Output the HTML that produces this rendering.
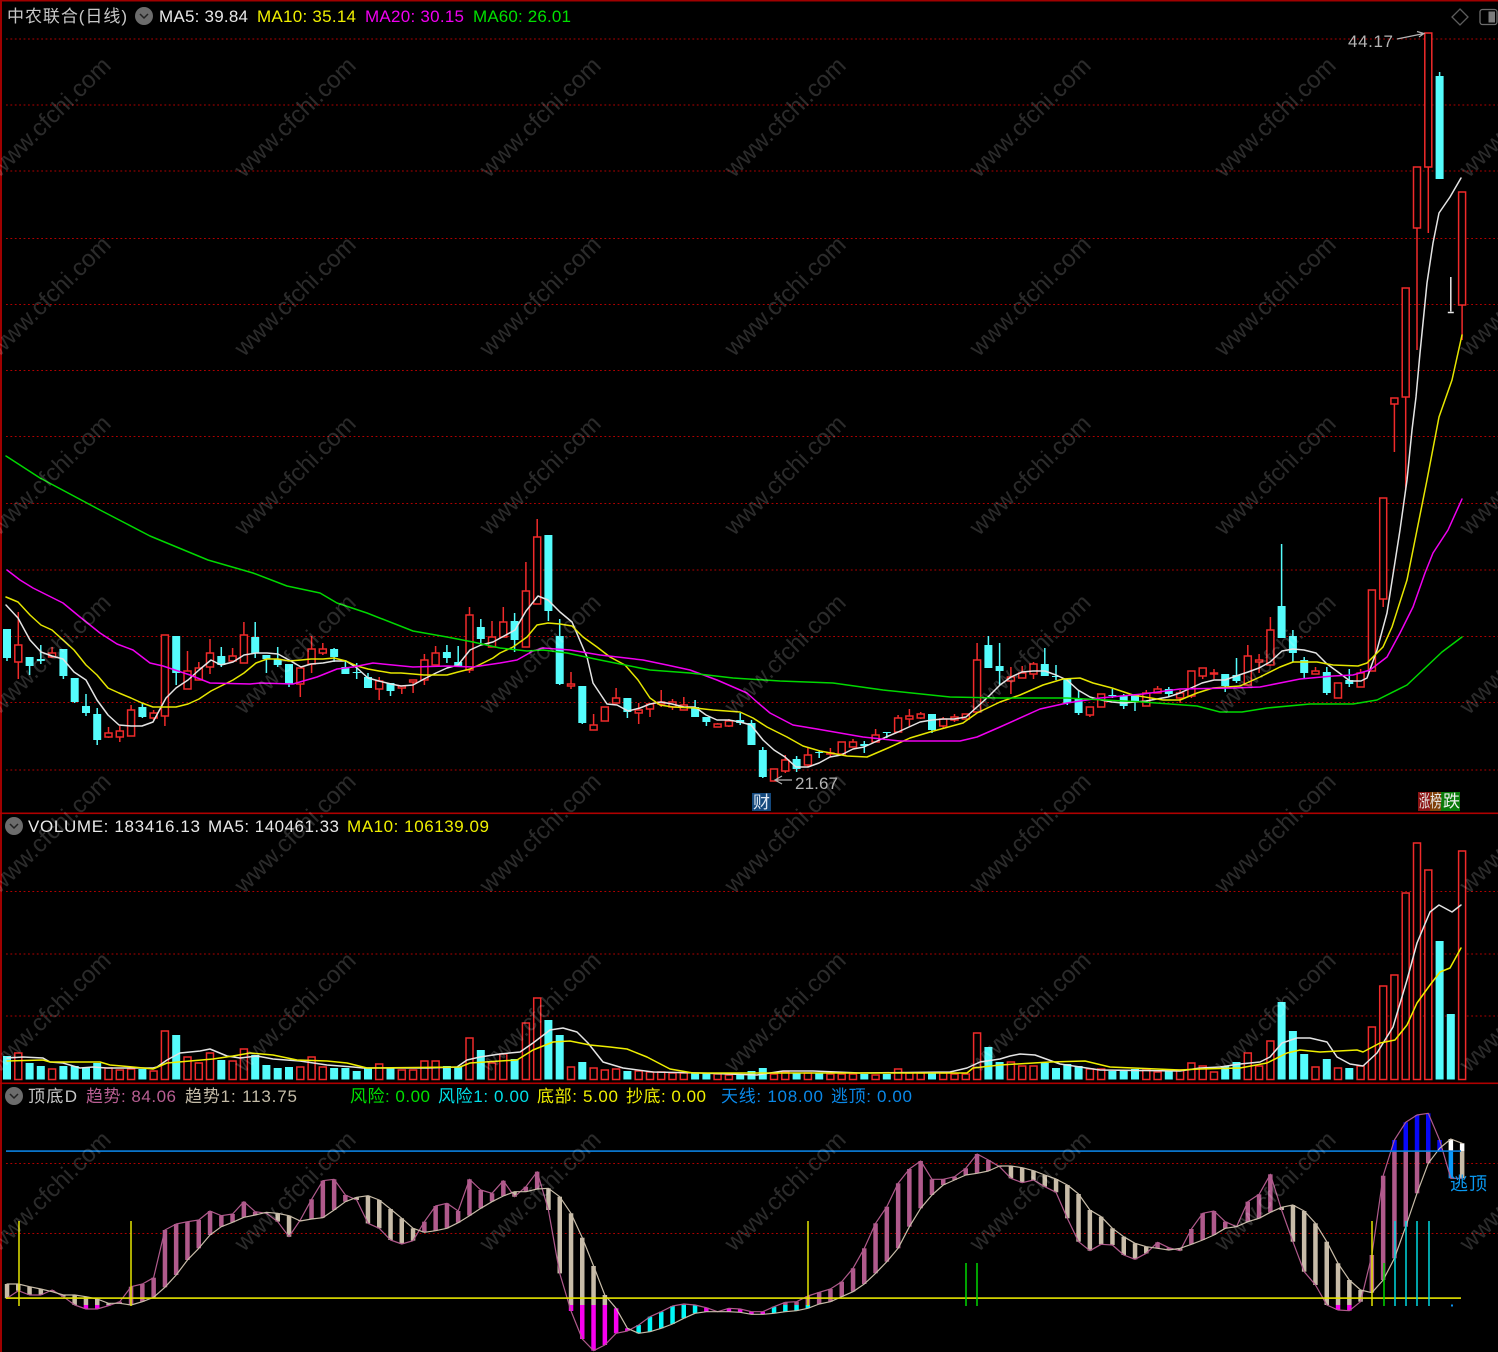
<!DOCTYPE html>
<html lang="zh">
<head>
<meta charset="utf-8">
<title>中农联合(日线)</title>
<style>
html,body{margin:0;padding:0;background:#000;width:1498px;height:1352px;overflow:hidden}
svg{display:block;position:absolute;left:0;top:0;filter:blur(.25px)}
text{font-family:"Liberation Sans","Noto Sans CJK SC",sans-serif;font-size:17px}
.g{stroke:#b00000;stroke-width:1.100;stroke-dasharray:1.800 2.600;fill:none}
.l{fill:none;stroke-width:1.500;stroke-linejoin:round;stroke-linecap:round}
.w{fill:#fff;fill-opacity:.17;font-size:24px;text-anchor:middle}
</style>
</head>
<body>
<svg width="1498" height="1352" viewBox="0 0 1498 1352" xmlns="http://www.w3.org/2000/svg">
<rect width="1498" height="1352" fill="#000"/>
<!-- grid -->
<path class="g" d="M6 39H1498M6 105H1498M6 171H1498M6 238.500H1498M6 304.500H1498M6 370.500H1498M6 436.500H1498M6 503.500H1498M6 570H1498M6 636.500H1498M6 702.500H1498M6 770H1498M6 891.500H1498M6 954H1498M6 1016H1498M6 1163.500H1498M6 1233.500H1498"/>
<!-- frame -->
<rect x="0" y="0" width="1498" height="1.500" fill="#a00000"/>
<rect x="0" y="0" width="2" height="1352" fill="#a00000"/>
<rect x="0" y="812.500" width="1498" height="1.600" fill="#b00000"/>
<rect x="0" y="1082.500" width="1498" height="1.600" fill="#b00000"/>

<g id="candles"></g>
<polyline class="l" stroke="#e4e4e4" points="6,605 18,618 30,640 41,652 52,656 63,659 74,672 86,680 97,700 108,715 119,725 131,726 142,726 153,722 166,698 176,688 188,680 199,670 211,660 221,665 233,662 244,655 256,653 267,653 278,654 289,660 301,667 311,664 323,663 334,661 346,661 357,668 368,678 379,681 391,684 401,686 413,685 424,679 436,673 447,668 458,665 470,650 481,645 493,642 504,636 515,630 526,611 538,596 548,600 560,612 572,622 587,657 593,683 607,704 617,705 628,711 640,708 650,704 661,702 672,704 684,707 695,707 706,715 717,720 729,720 740,722 751,725 763,740 774,750 785,757 796,767 808,767 819,763 830,757 841,755 853,749 864,747 875,742 886,737 898,732 909,727 920,722 932,720 943,719 954,719 966,717 977,707 988,697 1000,685 1011,677 1022,672 1033,671 1045,671 1056,675 1067,680 1078,690 1090,697 1101,700 1112,702 1123,703 1135,702 1146,701 1157,699 1168,697 1180,693 1191,688 1202,683 1214,680 1225,680 1236,676 1248,672 1259,668 1270,662 1282,651 1293,649 1304,650 1316,653 1327,664 1338,672 1350,681 1361,681 1367,678 1377,650 1387,613 1400,530 1407,480 1412,430 1416,397 1420,353 1427,283 1433,243 1439,213 1450,197 1461,178"/>
<polyline class="l" stroke="#e6e600" points="6,597 18,602 30,615 41,625 52,630 63,640 74,650 86,665 97,675 108,688 119,693 131,698 142,703 153,707 166,707 176,707 188,704 199,699 211,691 221,686 233,680 244,673 256,663 267,659 278,659 289,661 301,660 311,659 323,659 334,658 346,661 357,666 368,669 379,671 391,673 401,673 413,674 424,675 436,675 447,675 458,672 470,669 481,664 493,658 500,653 513,647 527,637 537,625 548,623 560,624 572,626 583,637 597,647 610,657 625,665 638,680 650,698 660,705 673,707 695,708 713,710 740,712 753,718 767,727 787,737 803,746 820,751 847,756 867,757 888,748 910,738 930,732 963,723 977,713 1000,702 1020,695 1043,685 1063,679 1080,678 1093,683 1112,688 1133,695 1163,700 1180,700 1197,693 1213,688 1240,686 1260,677 1280,667 1293,662 1317,662 1333,665 1358,666 1367,663 1383,647 1392,627 1407,580 1417,530 1427,480 1439,417 1452,380 1462,335"/>
<polyline class="l" stroke="#f000f0" points="7,570 20,580 33,588 63,603 80,617 100,633 117,644 133,650 150,663 163,666 190,675 210,683 250,684 260,683 293,684 317,677 337,669 353,667 373,663 413,667 447,666 473,667 500,663 517,660 533,651 543,648 570,650 600,655 643,660 667,665 690,670 717,680 747,693 757,702 770,713 793,725 817,729 863,737 900,741 960,741 977,737 1000,727 1040,709 1067,703 1100,698 1143,694 1180,689 1233,688 1260,687 1300,679 1333,676 1353,675 1370,670 1387,657 1400,633 1413,607 1425,573 1433,553 1448,530 1462,499"/>
<polyline class="l" stroke="#00d800" points="6,456 40,478 100,510 150,536 208,560 253,573 287,586 320,593 337,603 367,613 413,631 447,637 473,642 500,648 527,651 543,650 567,653 600,660 650,670 690,673 733,678 780,681 833,683 883,690 950,697 1000,698 1067,698 1143,702 1197,706 1220,712 1242,712 1267,708 1310,704 1353,704 1377,700 1407,685 1442,652 1462,637"/>

<g id="vol"></g>
<polyline class="l" stroke="#e4e4e4" points="7,1058 23,1057 43,1058 50,1062 63,1063 80,1068 93,1067 107,1068 153,1068 157,1067 167,1060 180,1053 200,1051 210,1049 227,1056 240,1058 257,1056 273,1059 300,1061 327,1065 353,1067 363,1068 427,1068 457,1067 467,1060 480,1057 500,1054 520,1052 533,1043 550,1030 563,1028 577,1032 588,1043 603,1062 623,1068 653,1072 700,1073 757,1075 783,1071 813,1071 860,1073 950,1072 967,1068 980,1062 1000,1059 1010,1056 1020,1054 1035,1055 1060,1064 1100,1070 1180,1071 1200,1068 1220,1067 1240,1064 1260,1062 1270,1057 1282,1043 1297,1038 1310,1038 1327,1042 1337,1057 1350,1064 1363,1066 1377,1053 1393,1027 1407,980 1417,943 1430,912 1439,905 1452,912 1461,905"/>
<polyline class="l" stroke="#eeee00" points="7,1061 43,1060 50,1062 100,1062 110,1065 133,1067 153,1069 167,1063 190,1061 213,1059 233,1056 250,1053 273,1055 297,1060 327,1061 347,1063 367,1068 460,1067 470,1063 500,1061 517,1060 533,1050 553,1042 570,1041 590,1045 610,1047 627,1049 647,1057 670,1069 693,1073 967,1073 973,1068 1000,1065 1050,1062 1085,1061 1110,1067 1180,1070 1200,1069 1240,1068 1267,1063 1287,1053 1300,1050 1320,1052 1357,1050 1363,1052 1380,1043 1395,1040 1407,1025 1417,1003 1430,985 1440,972 1450,968 1461,948"/>

<g id="ind"></g>
<rect x="6" y="1150.300" width="1455" height="1.600" fill="#0a80e0"/>
<rect x="6" y="1297.300" width="1455" height="1.600" fill="#e4e400"/>
<path fill="none" stroke-width="1.500" stroke="#e4e400" d="M19 1221V1306M131 1221V1306M808 1221V1306M1372 1221V1306"/>
<path fill="none" stroke-width="1.500" stroke="#00d800" d="M966 1263V1306M977 1263V1306M1384 1263V1306"/>
<path fill="none" stroke-width="1.500" stroke="#00d8e0" d="M1395 1221V1306M1406 1221V1306M1417 1221V1306M1429 1221V1306"/>
<rect x="1451" y="1304.500" width="2" height="2" fill="#0a90f0"/>

<!-- watermark -->
<g>
<text class="w" transform="translate(50,117) rotate(-44.500)" y="8">www.cfchi.com</text>
<text class="w" transform="translate(295,117) rotate(-44.500)" y="8">www.cfchi.com</text>
<text class="w" transform="translate(540,117) rotate(-44.500)" y="8">www.cfchi.com</text>
<text class="w" transform="translate(785,117) rotate(-44.500)" y="8">www.cfchi.com</text>
<text class="w" transform="translate(1030,117) rotate(-44.500)" y="8">www.cfchi.com</text>
<text class="w" transform="translate(1275,117) rotate(-44.500)" y="8">www.cfchi.com</text>
<text class="w" transform="translate(1520,117) rotate(-44.500)" y="8">www.cfchi.com</text>
<text class="w" transform="translate(50,296) rotate(-44.500)" y="8">www.cfchi.com</text>
<text class="w" transform="translate(295,296) rotate(-44.500)" y="8">www.cfchi.com</text>
<text class="w" transform="translate(540,296) rotate(-44.500)" y="8">www.cfchi.com</text>
<text class="w" transform="translate(785,296) rotate(-44.500)" y="8">www.cfchi.com</text>
<text class="w" transform="translate(1030,296) rotate(-44.500)" y="8">www.cfchi.com</text>
<text class="w" transform="translate(1275,296) rotate(-44.500)" y="8">www.cfchi.com</text>
<text class="w" transform="translate(1520,296) rotate(-44.500)" y="8">www.cfchi.com</text>
<text class="w" transform="translate(50,475) rotate(-44.500)" y="8">www.cfchi.com</text>
<text class="w" transform="translate(295,475) rotate(-44.500)" y="8">www.cfchi.com</text>
<text class="w" transform="translate(540,475) rotate(-44.500)" y="8">www.cfchi.com</text>
<text class="w" transform="translate(785,475) rotate(-44.500)" y="8">www.cfchi.com</text>
<text class="w" transform="translate(1030,475) rotate(-44.500)" y="8">www.cfchi.com</text>
<text class="w" transform="translate(1275,475) rotate(-44.500)" y="8">www.cfchi.com</text>
<text class="w" transform="translate(1520,475) rotate(-44.500)" y="8">www.cfchi.com</text>
<text class="w" transform="translate(50,654) rotate(-44.500)" y="8">www.cfchi.com</text>
<text class="w" transform="translate(295,654) rotate(-44.500)" y="8">www.cfchi.com</text>
<text class="w" transform="translate(540,654) rotate(-44.500)" y="8">www.cfchi.com</text>
<text class="w" transform="translate(785,654) rotate(-44.500)" y="8">www.cfchi.com</text>
<text class="w" transform="translate(1030,654) rotate(-44.500)" y="8">www.cfchi.com</text>
<text class="w" transform="translate(1275,654) rotate(-44.500)" y="8">www.cfchi.com</text>
<text class="w" transform="translate(1520,654) rotate(-44.500)" y="8">www.cfchi.com</text>
<text class="w" transform="translate(50,833) rotate(-44.500)" y="8">www.cfchi.com</text>
<text class="w" transform="translate(295,833) rotate(-44.500)" y="8">www.cfchi.com</text>
<text class="w" transform="translate(540,833) rotate(-44.500)" y="8">www.cfchi.com</text>
<text class="w" transform="translate(785,833) rotate(-44.500)" y="8">www.cfchi.com</text>
<text class="w" transform="translate(1030,833) rotate(-44.500)" y="8">www.cfchi.com</text>
<text class="w" transform="translate(1275,833) rotate(-44.500)" y="8">www.cfchi.com</text>
<text class="w" transform="translate(1520,833) rotate(-44.500)" y="8">www.cfchi.com</text>
<text class="w" transform="translate(50,1012) rotate(-44.500)" y="8">www.cfchi.com</text>
<text class="w" transform="translate(295,1012) rotate(-44.500)" y="8">www.cfchi.com</text>
<text class="w" transform="translate(540,1012) rotate(-44.500)" y="8">www.cfchi.com</text>
<text class="w" transform="translate(785,1012) rotate(-44.500)" y="8">www.cfchi.com</text>
<text class="w" transform="translate(1030,1012) rotate(-44.500)" y="8">www.cfchi.com</text>
<text class="w" transform="translate(1275,1012) rotate(-44.500)" y="8">www.cfchi.com</text>
<text class="w" transform="translate(1520,1012) rotate(-44.500)" y="8">www.cfchi.com</text>
<text class="w" transform="translate(50,1191) rotate(-44.500)" y="8">www.cfchi.com</text>
<text class="w" transform="translate(295,1191) rotate(-44.500)" y="8">www.cfchi.com</text>
<text class="w" transform="translate(540,1191) rotate(-44.500)" y="8">www.cfchi.com</text>
<text class="w" transform="translate(785,1191) rotate(-44.500)" y="8">www.cfchi.com</text>
<text class="w" transform="translate(1030,1191) rotate(-44.500)" y="8">www.cfchi.com</text>
<text class="w" transform="translate(1275,1191) rotate(-44.500)" y="8">www.cfchi.com</text>
<text class="w" transform="translate(1520,1191) rotate(-44.500)" y="8">www.cfchi.com</text>
</g>

<!-- header row 1 -->
<text x="7" y="22" fill="#c8c8c8" textLength="120">中农联合(日线)</text>
<circle cx="144" cy="16" r="9" fill="#6c6c6c"/>
<path d="M140 14l4 4 4-4" fill="none" stroke="#222" stroke-width="1.500"/>
<text x="159" y="22" fill="#e8e8e8" textLength="89">MA5: 39.84</text>
<text x="257" y="22" fill="#f0f000" textLength="99">MA10: 35.14</text>
<text x="365" y="22" fill="#f000f0" textLength="99">MA20: 30.15</text>
<text x="473" y="22" fill="#00e000" textLength="98">MA60: 26.01</text>

<!-- top right icons -->
<path d="M1460 9l8 8-8 8-8-8z" fill="none" stroke="#5c5c5c" stroke-width="1.300"/>
<rect x="1480" y="9.500" width="17" height="15" rx="2.500" fill="#000" stroke="#6c6c6c" stroke-width="1.300"/>
<rect x="1488.500" y="11.500" width="6.500" height="11" fill="#7c7c7c"/>

<!-- price labels -->
<text x="1348" y="47" fill="#b4b4b4" textLength="45">44.17</text>
<path d="M1397 39L1424 33.500M1417 31.500L1424 33.500L1419 37" fill="none" stroke="#b4b4b4" stroke-width="1.200"/>
<text x="795" y="789" fill="#b4b4b4" textLength="43">21.67</text>
<path d="M792 780H775M782 776L775 780L782 784" fill="none" stroke="#b4b4b4" stroke-width="1.200"/>

<!-- badges -->
<rect x="752" y="793" width="19" height="18" fill="#14487c"/>
<text x="753" y="808" fill="#dfe8f4" textLength="17">财</text>
<rect x="1418" y="792" width="12" height="19" fill="#8c1414"/>
<rect x="1430" y="792" width="11" height="19" fill="#80400a"/>
<rect x="1441" y="792" width="19" height="19" fill="#0a7a0a"/>
<text x="1419" y="807" fill="#e8e8e8" textLength="11" lengthAdjust="spacingAndGlyphs">涨</text>
<text x="1430" y="807" fill="#e8e8e8" textLength="12" lengthAdjust="spacingAndGlyphs">榜</text>
<text x="1443" y="807" fill="#f0f0f0" textLength="17">跌</text>

<!-- header row 2 -->
<circle cx="14" cy="826" r="9" fill="#6c6c6c"/>
<path d="M10 824l4 4 4-4" fill="none" stroke="#222" stroke-width="1.500"/>
<text x="28" y="832" fill="#e8e8e8" textLength="172">VOLUME: 183416.13</text>
<text x="208" y="832" fill="#e8e8e8" textLength="131">MA5: 140461.33</text>
<text x="347" y="832" fill="#f0f000" textLength="142">MA10: 106139.09</text>

<!-- header row 3 -->
<circle cx="14" cy="1096" r="9" fill="#6c6c6c"/>
<path d="M10 1094l4 4 4-4" fill="none" stroke="#222" stroke-width="1.500"/>
<text x="28" y="1102" fill="#c8c8c8" textLength="49">顶底D</text>
<text x="86" y="1102" fill="#b85e92" textLength="90">趋势: 84.06</text>
<text x="185" y="1102" fill="#c4bca8" textLength="112">趋势1: 113.75</text>
<text x="350" y="1102" fill="#00e000" textLength="80">风险: 0.00</text>
<text x="438" y="1102" fill="#00e0e8" textLength="91">风险1: 0.00</text>
<text x="537" y="1102" fill="#f0f000" textLength="81">底部: 5.00</text>
<text x="626" y="1102" fill="#f0f000" textLength="80">抄底: 0.00</text>
<text x="721" y="1102" fill="#0a88e8" textLength="102">天线: 108.00</text>
<text x="831" y="1102" fill="#0a88e8" textLength="81">逃顶: 0.00</text>
<text x="1450" y="1190" fill="#0a98f0" textLength="37" style="font-size:18px">逃顶</text>
</svg>
<script>
(function(){
var X=function(i){return 7+11.28*i};
var R='#f02a2a',C='#54fcfc',W='#e8e8e8';
// type(0 red,1 cyan,2 white),top,bottom,high,low
var K=[[1,629,658,629,661],[0,645,662,612,679],[1,657,666,657,675],[1,659,661,645,664],[0,653,657,647,658],[1,649,676,649,679],[1,678,702,678,703],[1,706,713,694,716],[1,714,740,708,745],[0,733,737,727,738],
[0,731,737,726,742],[0,710,736,705,736],[1,707,717,703,718],[0,713,718,710,720],[0,635,716,635,726],[1,636,673,636,685],[0,671,689,651,689],[0,668,680,662,680],[0,653,667,639,674],[1,656,665,647,667],
[0,656,661,648,661],[0,635,663,622,663],[1,637,653,622,658],[1,655,659,655,673],[1,659,665,647,667],[1,664,684,664,687],[0,668,684,668,697],[0,649,664,636,673],[0,649,653,643,655],[1,649,657,648,662],
[1,667,674,660,674],[1,672,673,663,679],[1,677,688,673,688],[0,681,689,677,700],[1,683,691,683,696],[0,686,688,686,694],[0,680,682,680,693],[0,660,680,654,685],[0,653,665,646,665],[1,652,658,645,663],
[1,662,666,646,666],[0,615,670,607,673],[1,627,639,619,643],[0,637,647,621,647],[0,622,637,607,637],[1,621,640,613,652],[0,591,647,562,647],[0,537,604,519,604],[1,535,611,535,621],[1,636,684,619,685],
[0,684,686,672,689],[1,686,723,686,724],[0,725,730,714,730],[0,707,721,707,721],[0,698,703,688,703],[1,698,712,698,718],[0,710,713,703,724],[0,704,709,704,717],[0,702,704,690,707],[0,702,707,699,710],
[0,705,710,697,710],[1,707,717,700,717],[1,717,722,717,726],[0,724,727,723,727],[0,721,726,719,727],[1,720,723,713,725],[1,723,745,720,745],[1,750,777,747,778],[0,769,781,769,781],[0,760,771,755,773],
[1,759,769,756,772],[0,755,765,748,767],[1,752,753,750,758],[0,753,754,748,757],[0,742,754,742,754],[0,742,747,739,747],[1,744,746,741,753],[0,735,742,729,742],[1,732,733,732,738],[0,718,732,715,732],
[0,716,719,709,727],[0,714,718,712,719],[1,714,730,714,733],[0,719,726,717,728],[0,717,720,714,722],[0,714,719,714,719],[0,660,712,643,712],[1,645,668,636,668],[1,666,671,643,685],[0,677,681,667,694],
[0,673,678,666,678],[0,664,674,662,679],[1,664,676,648,676],[1,676,677,665,680],[1,679,703,679,705],[1,699,713,690,715],[0,707,715,707,717],[0,694,707,694,707],[1,695,696,689,698],[1,696,706,694,709],
[1,695,702,694,711],[0,693,706,690,706],[0,689,693,686,693],[1,689,694,687,697],[0,693,698,690,703],[0,671,696,671,698],[0,668,676,668,679],[0,673,674,669,679],[1,674,686,674,692],[1,675,681,658,683],
[0,656,685,645,685],[0,660,662,654,673],[0,630,665,617,665],[1,606,638,544,638],[1,636,653,630,662],[1,660,673,657,678],[0,671,674,667,674],[1,672,693,667,695],[0,683,698,683,698],[1,680,684,669,687],
[0,673,687,669,687],[0,590,671,590,671],[0,498,599,498,607],[0,398,404,398,452],[0,288,397,288,490],[0,167,228,167,350],[0,33,167,33,233],[1,76,179,72,179],[2,311.500,312.500,277,312.500],[0,192,305,192,340]];
var V=[1056,1053,1063,1066,1069,1066,1066,1068,1063,1068,1070,1069,1069,1071,1031,1035,1057,1063,1053,1060,1061,1049,1055,1065,1068,1067,1067,1057,1067,1068,1068,1071,1068,1064,1068,1070,1070,1061,1061,1066,1067,1038,1050,1063,1054,1059,1023,998,1020,1035,1067,1062,1068,1070,1069,1071,1071,1072,1072,1073,1073,1073,1073,1074,1075,1074,1071,1068,1074,1072,1073,1073,1073,1074,1074,1074,1074,1075,1074,1069,1073,1073,1073,1073,1074,1074,1033,1047,1062,1062,1066,1066,1063,1068,1064,1066,1069,1069,1071,1070,1069,1070,1072,1071,1070,1063,1066,1072,1066,1062,1053,1066,1041,1002,1031,1054,1067,1059,1068,1068,1066,1027,986,975,893,843,870,941,1014,851];
var A=[640,617,630,630,615,635,660,672,672,662,650,605,597,578,435,417,410,405,378,392,387,350,380,385,410,455,405,343,287,283,330,345,415,430,465,477,467,410,363,355,378,283,315,325,287,335,305,260,375,565,678,762,797,780,745,738,720,695,680,663,657,660,668,680,670,672,680,680,665,652,650,633,622,612,590,550,490,415,365,295,252,228,283,283,275,250,207,225,245,280,293,285,305,322,400,470,497,478,480,510,523,505,472,488,497,432,385,378,410,425,350,328,268,375,470,560,600,660,675,677,650,510,272,165,112,90,85,165,280,280];
var B=[597,597,605,612,620,630,630,635,642,655,655,660,650,637,607,570,525,490,450,425,412,397,390,382,385,392,408,402,398,375,350,337,332,345,372,400,430,442,437,430,413,392,370,350,333,320,320,312,310,335,385,458,543,630,670,730,745,740,730,717,700,685,680,680,680,682,688,688,685,680,677,670,657,650,635,620,597,565,530,490,425,370,330,300,285,270,265,258,243,243,248,257,270,282,300,327,375,395,430,455,475,485,490,495,490,478,465,450,430,425,410,400,382,367,360,378,415,470,535,585,615,623,585,520,425,325,235,190,162,175];
var i,x,k,s='',wr='',wc='',ww='',rr='',cc='';
for(i=0;i<K.length;i++){k=K[i];x=X(i).toFixed(1);
 var w='M'+x+' '+k[3]+'V'+k[1]+'M'+x+' '+k[2]+'V'+k[4];
 if(k[0]==0){wr+=w;rr+='M'+(x-3.5)+' '+k[1]+'h7V'+k[2]+'h-7z';}
 else if(k[0]==1){wc+=w;cc+='M'+(x-4)+' '+k[1]+'h8V'+k[2]+'h-8z';}
 else{ww+=w+'M'+(x-3)+' '+k[2]+'h6';}
}
s='<path d="'+wr+'" stroke="'+R+'" stroke-width="1.500" fill="none"/>'+
  '<path d="'+wc+'" stroke="'+C+'" stroke-width="1.500" fill="none"/>'+
  '<path d="'+ww+'" stroke="'+W+'" stroke-width="1.500" fill="none"/>'+
  '<path d="'+rr+'" stroke="'+R+'" stroke-width="1.500" fill="#000"/>'+
  '<path d="'+cc+'" fill="'+C+'"/>';
document.getElementById('candles').innerHTML=s;
var vr='',vc='';
for(i=0;i<V.length;i++){x=X(i);var t=K[i][0];if(i==128)t=1;
 if(t==0)vr+='M'+(x-3.5).toFixed(1)+' '+V[i]+'h7V1079.500h-7z';
 else vc+='M'+(x-4).toFixed(1)+' '+V[i]+'h8V1079.500h-8z';
}
document.getElementById('vol').innerHTML='<path d="'+vr+'" stroke="'+R+'" stroke-width="1.500" fill="#000"/><path d="'+vc+'" fill="'+C+'"/>';
var Y=function(z){return 1085+z/3};
var P='#b05a8c',E='#c8bca8',M='#f800f0',Q='#00f8f8',BL='#0808f8',WH='#ffffff',LB='#0a98f8';
var cyanLow={};[56,57,58,59,60,61,68,69,70,71].forEach(function(n){cyanLow[n]=1});
var out='',pa='',pb='';
function seg(x,a,b,c){if(b<=a)return;out+='<rect x="'+(x-2.25).toFixed(1)+'" y="'+Y(a).toFixed(1)+'" width="4.500" height="'+((b-a)/3).toFixed(1)+'" fill="'+c+'"/>';}
for(i=0;i<A.length;i++){x=X(i);var a=A[i],b=B[i],top=Math.min(a,b),bot=Math.max(a,b),col=a<b?P:E;
 pa+=x.toFixed(1)+','+Y(a).toFixed(1)+' ';pb+=x.toFixed(1)+','+Y(b).toFixed(1)+' ';
 if(i==128){seg(x,162,198,WH);seg(x,198,280,LB);continue;}
 if(i==129){seg(x,175,198,WH);seg(x,198,280,E);continue;}
 if(top<198){seg(x,top,198,a<b?BL:WH);top=198;}
 seg(x,top,Math.min(bot,660),col);
 if(bot>660)seg(x,Math.max(660,top),bot,cyanLow[i]?Q:M);
}
out+='<polyline class="l" style="stroke-width:1.200" stroke="'+P+'" points="'+pa+'"/>';
out+='<polyline class="l" style="stroke-width:1.200" stroke="'+E+'" points="'+pb+'"/>';
document.getElementById('ind').innerHTML=out;
})();
</script>
</body>
</html>
